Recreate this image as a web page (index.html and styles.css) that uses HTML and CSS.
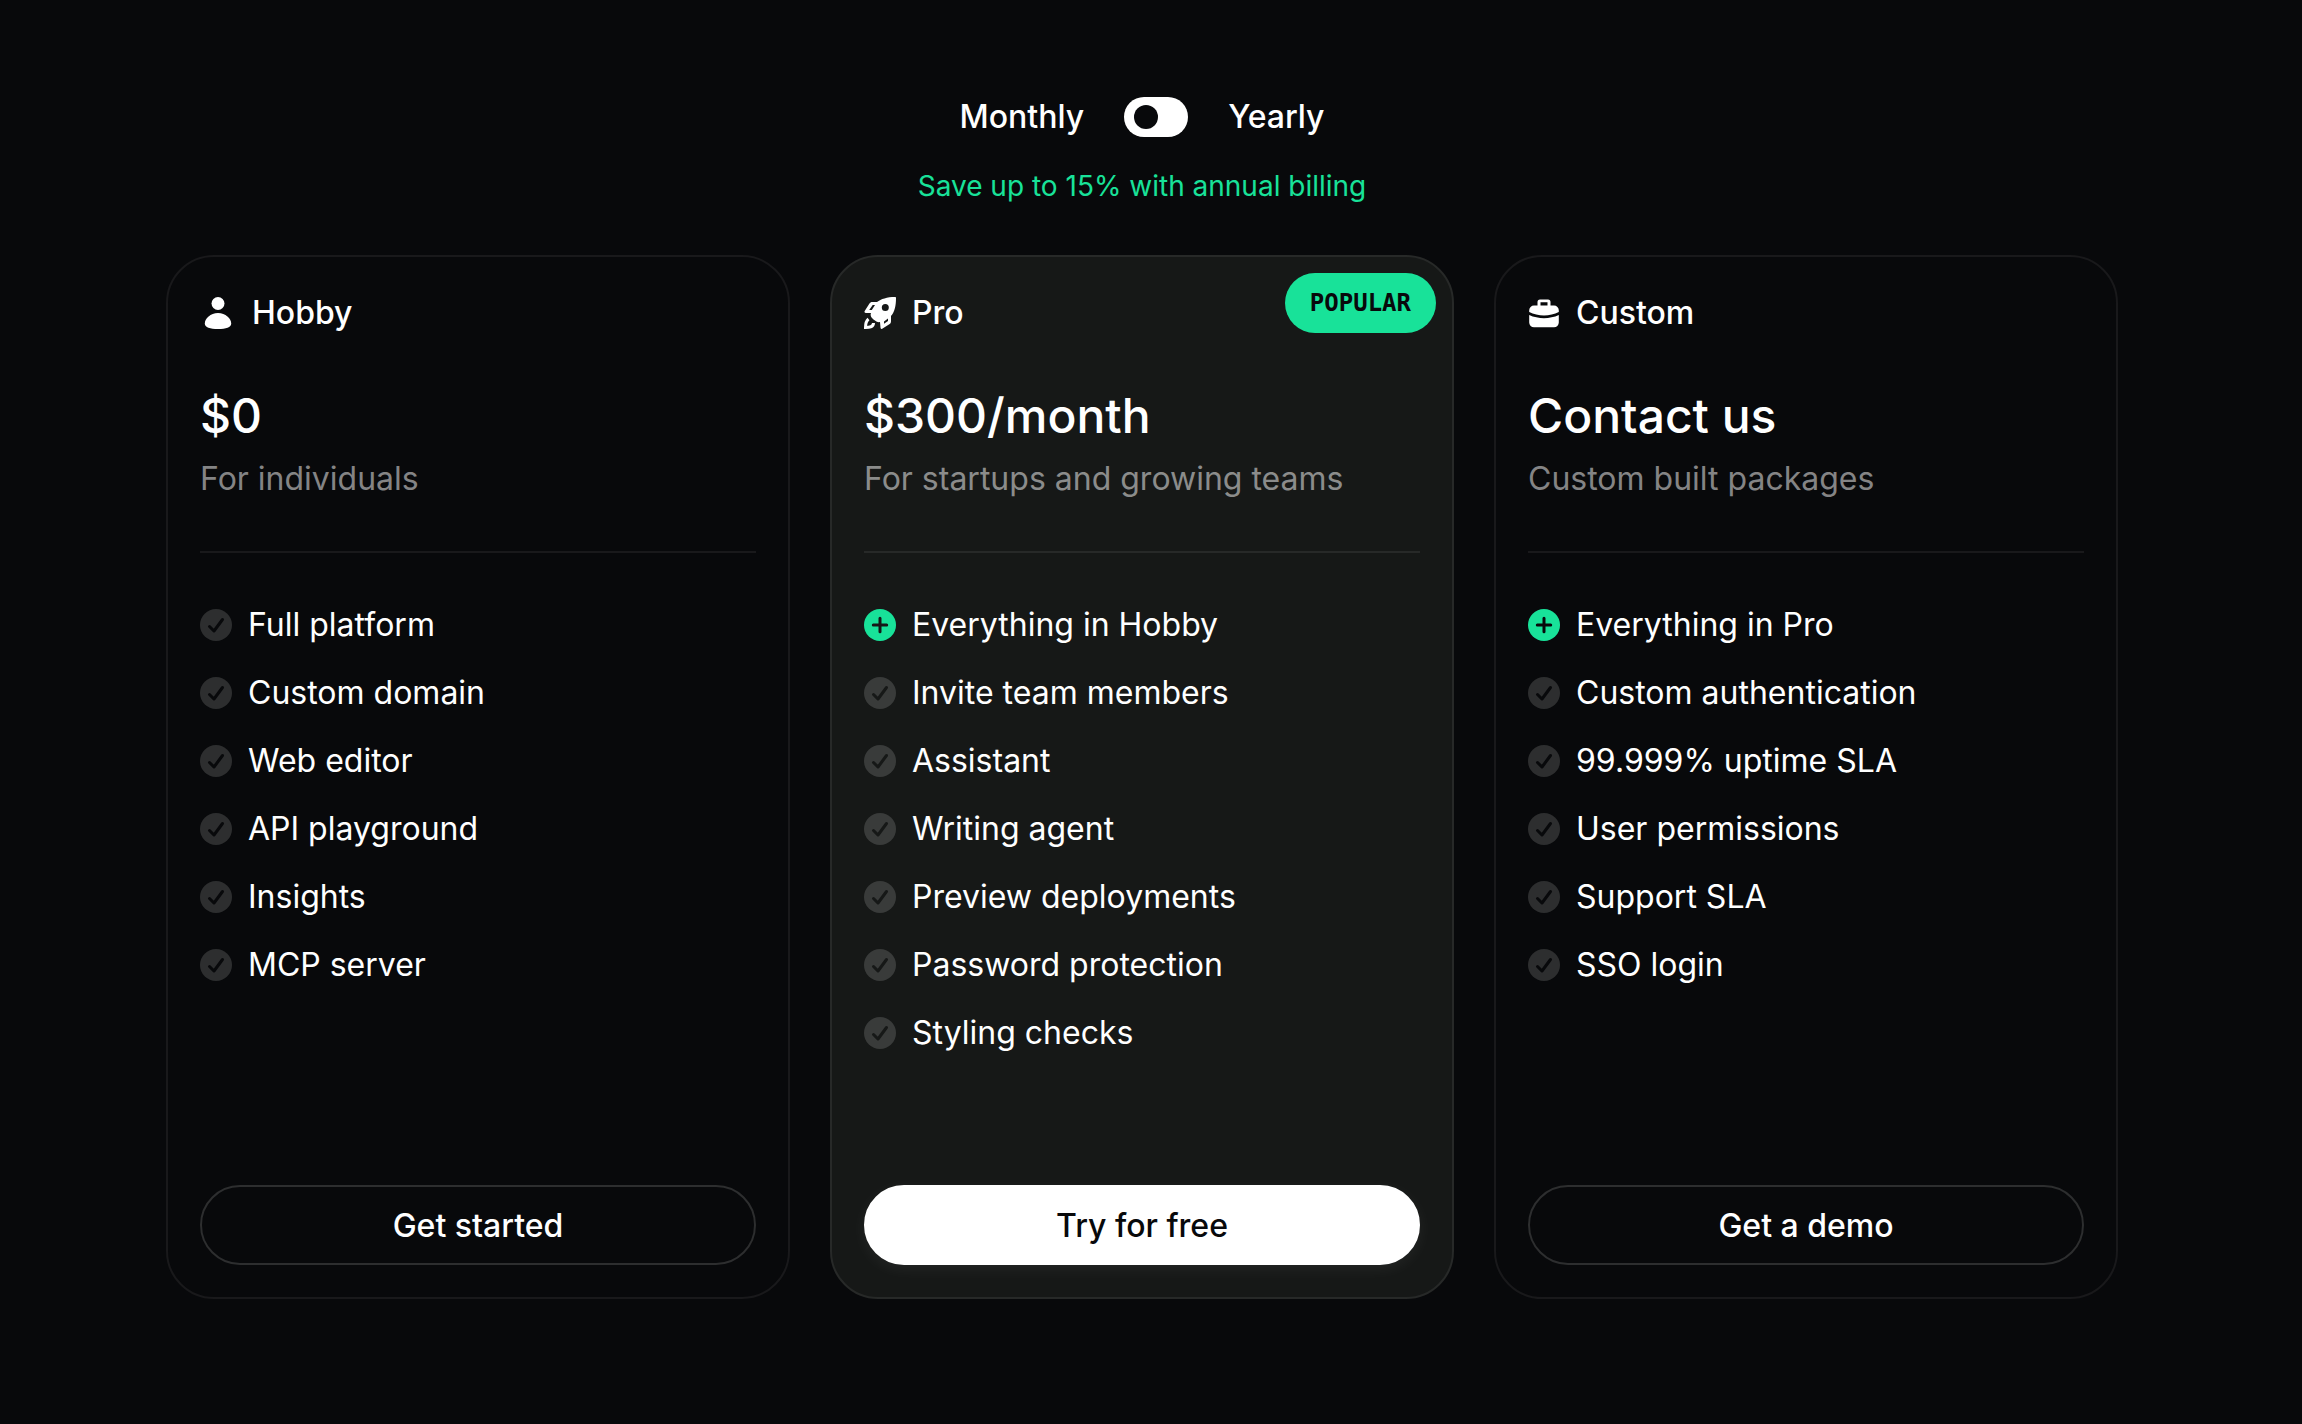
FILE: index.html
```html
<!DOCTYPE html>
<html lang="en">
<head>
  <meta charset="UTF-8">
  <meta name="viewport" content="width=device-width, initial-scale=1.0">
  <title>Pricing</title>
  <link rel="stylesheet" href="styles.css">
</head>
<body>
  <!-- shared icons -->
  <svg class="sprite" aria-hidden="true">
    <symbol id="icon-check" viewBox="0 0 32 32">
      <circle cx="16" cy="16" r="16" fill="currentColor"/>
      <path class="mark" d="M9.500 17.500l4.500 4.500 8.500-11.500"/>
    </symbol>
    <symbol id="icon-plus" viewBox="0 0 32 32">
      <circle cx="16" cy="16" r="16" fill="currentColor"/>
      <path class="mark" d="M16 9.300v13.400M9.300 16h13.400"/>
    </symbol>
  </svg>

  <main class="pricing">
    <div class="billing">
      <div class="billing-row">
        <label for="billing">Monthly</label>
        <input type="checkbox" id="billing" class="switch">
        <label for="billing">Yearly</label>
      </div>
      <p class="saving">Save up to 15% with annual billing</p>
    </div>

    <div class="plans">
      <section class="plan">
        <h2 class="plan-name">
          <svg class="plan-icon wide" viewBox="0 0 36 36" fill="currentColor" aria-hidden="true">
            <circle cx="18" cy="8.500" r="6.500"/>
            <path d="M18 18c7.500 0 13.200 5.500 13.200 10.500 0 4-5.200 5.500-13.200 5.500S4.800 32.500 4.800 28.500C4.800 23.500 10.500 18 18 18z"/>
          </svg>
          Hobby
        </h2>
        <p class="price">$0</p>
        <p class="summary">For individuals</p>
        <ul class="features">
          <li><svg class="tick"><use href="#icon-check"/></svg>Full platform</li>
          <li><svg class="tick"><use href="#icon-check"/></svg>Custom domain</li>
          <li><svg class="tick"><use href="#icon-check"/></svg>Web editor</li>
          <li><svg class="tick"><use href="#icon-check"/></svg>API playground</li>
          <li><svg class="tick"><use href="#icon-check"/></svg>Insights</li>
          <li><svg class="tick"><use href="#icon-check"/></svg>MCP server</li>
        </ul>
        <button type="button" class="action">Get started</button>
      </section>

      <section class="plan featured">
        <span class="badge">POPULAR</span>
        <h2 class="plan-name">
          <svg class="plan-icon" viewBox="0 0 32 32" aria-hidden="true">
            <path fill="currentColor" fill-rule="evenodd" d="M31 0C23 0 17 2 13 5H8.500C7 5 6 5.500 5.300 6.800L.700 14c-.600 1 0 1.900 1 1.900L7 16c-1 2.500 0 4.500 2.500 6.500C12 24.500 14 25.500 16 25L16.500 30.500c0 1.200.800 1.700 1.700 1.200l7.500-4.700C26.700 26.300 27 25.500 27 24v-5c3.500-4 5-10 5-18 0-.700-.300-1-1-1zM8.700 8h2.300l-3.200 5H5.200zM24 21.500V24l-4 2.800V24.500zM21.300 7a3.500 3.500 0 1 1 0 7 3.500 3.500 0 0 1 0-7z"/>
            <path fill="none" stroke="currentColor" stroke-width="3" d="M4.500 22C1.500 24.500 1.500 27 1.500 30.500 5 30.500 9.500 30.500 9.500 26"/>
          </svg>
          Pro
        </h2>
        <p class="price">$300/month</p>
        <p class="summary">For startups and growing teams</p>
        <ul class="features">
          <li><svg class="tick plus"><use href="#icon-plus"/></svg>Everything in Hobby</li>
          <li><svg class="tick"><use href="#icon-check"/></svg>Invite team members</li>
          <li><svg class="tick"><use href="#icon-check"/></svg>Assistant</li>
          <li><svg class="tick"><use href="#icon-check"/></svg>Writing agent</li>
          <li><svg class="tick"><use href="#icon-check"/></svg>Preview deployments</li>
          <li><svg class="tick"><use href="#icon-check"/></svg>Password protection</li>
          <li><svg class="tick"><use href="#icon-check"/></svg>Styling checks</li>
        </ul>
        <button type="button" class="action">Try for free</button>
      </section>

      <section class="plan">
        <h2 class="plan-name">
          <svg class="plan-icon" viewBox="0 0 32 32" fill="currentColor" aria-hidden="true">
            <path fill-rule="evenodd" d="M12 2.500h8a2.500 2.500 0 0 1 2.500 2.500v3.500H26a4.800 4.800 0 0 1 4.800 4.800V15C22 19.500 10 19.500 1.200 15v-1.700A4.800 4.800 0 0 1 6 8.500h3.500V5A2.500 2.500 0 0 1 12 2.500zM12.500 5.300v3.200h7V5.300z"/>
            <path d="M1.200 18c9 4.200 20.600 4.200 29.600 0v7.500a4.800 4.800 0 0 1-4.800 4.800H6a4.800 4.800 0 0 1-4.800-4.800z"/>
          </svg>
          Custom
        </h2>
        <p class="price">Contact us</p>
        <p class="summary">Custom built packages</p>
        <ul class="features">
          <li><svg class="tick plus"><use href="#icon-plus"/></svg>Everything in Pro</li>
          <li><svg class="tick"><use href="#icon-check"/></svg>Custom authentication</li>
          <li><svg class="tick"><use href="#icon-check"/></svg>99.999% uptime SLA</li>
          <li><svg class="tick"><use href="#icon-check"/></svg>User permissions</li>
          <li><svg class="tick"><use href="#icon-check"/></svg>Support SLA</li>
          <li><svg class="tick"><use href="#icon-check"/></svg>SSO login</li>
        </ul>
        <button type="button" class="action">Get a demo</button>
      </section>
    </div>
  </main>
</body>
</html>
```

FILE: styles.css
```css
* {
  box-sizing: border-box;
}

body {
  margin: 0;
  min-height: 100vh;
  background-color: #08090b;
  color: #fff;
  font-family: Inter, sans-serif;
  font-size: 32px;
  line-height: 48px;
}

h2,
p,
ul {
  margin: 0;
  padding: 0;
}

.sprite {
  position: absolute;
  width: 0;
  height: 0;
}

.pricing {
  padding: 97px 184px 96px 166px;
}

/* billing switch */
.billing {
  display: flex;
  flex-direction: column;
  align-items: center;
  gap: 29px;
  margin-bottom: 49px;
}

.billing-row {
  display: flex;
  align-items: center;
  gap: 40px;
  height: 40px;
  font-weight: 500;
}

.switch {
  appearance: none;
  display: flex;
  align-items: center;
  width: 64px;
  height: 40px;
  margin: 0;
  padding: 0 10px;
  border-radius: 20px;
  background-color: #fff;
  cursor: pointer;
}

.switch::before {
  content: "";
  width: 24px;
  height: 24px;
  border-radius: 50%;
  background-color: #08090b;
}

.switch:checked {
  justify-content: flex-end;
}

.saving {
  color: #18e299;
  font-size: 28px;
  line-height: 40px;
}

/* plan cards */
.plans {
  display: grid;
  grid-template-columns: repeat(3, 1fr);
  gap: 40px;
}

.plan {
  position: relative;
  display: flex;
  flex-direction: column;
  padding: 32px;
  border: 2px solid #19191b;
  border-radius: 48px;
}

.featured {
  background-color: #161817;
  border-color: #272928;
}

.plan-name {
  display: flex;
  align-items: center;
  gap: 16px;
  font-size: 32px;
  font-weight: 500;
}

.plan-icon {
  width: 32px;
  height: 32px;
}

.plan-icon.wide {
  width: 36px;
  height: 36px;
}

.badge {
  position: absolute;
  top: 16px;
  right: 16px;
  padding: 0 25px;
  border-radius: 30px;
  background-color: #18e299;
  color: #08090b;
  font-family: "DejaVu Sans Mono", monospace;
  font-size: 24px;
  font-weight: 700;
  line-height: 60px;
}

.price {
  margin-top: 44px;
  font-size: 48px;
  font-weight: 500;
  line-height: 70px;
}

.summary {
  margin-top: 4px;
  padding-bottom: 48px;
  border-bottom: 2px solid #19191b;
  color: #848485;
}

.featured .summary {
  border-color: #272928;
  color: #8b8c8b;
}

.features {
  display: flex;
  flex-direction: column;
  flex-grow: 1;
  gap: 20px;
  margin: 48px 0 128px;
  list-style: none;
}

.features li {
  display: flex;
  align-items: center;
  gap: 16px;
}

.tick {
  width: 32px;
  height: 32px;
  color: #2d2e2f;
  stroke: #08090b;
}

.tick circle {
  stroke: none;
}

.featured .tick {
  color: #393b3a;
  stroke: #161817;
}

.plan .plus {
  color: #18e299;
}

#icon-check circle,
#icon-plus circle {
  stroke: none;
}

.mark {
  fill: none;
  stroke-width: 3px;
  stroke-linecap: round;
  stroke-linejoin: round;
}

.action {
  height: 80px;
  padding: 0 32px;
  border: 2px solid #2d2e2f;
  border-radius: 40px;
  background-color: transparent;
  color: #fff;
  font-family: inherit;
  font-size: 32px;
  font-weight: 500;
  cursor: pointer;
}

.featured .action {
  border-color: #fff;
  background-color: #fff;
  box-shadow: 0 4px 16px rgba(255, 255, 255, 0.06);
  color: #08090b;
}
```
